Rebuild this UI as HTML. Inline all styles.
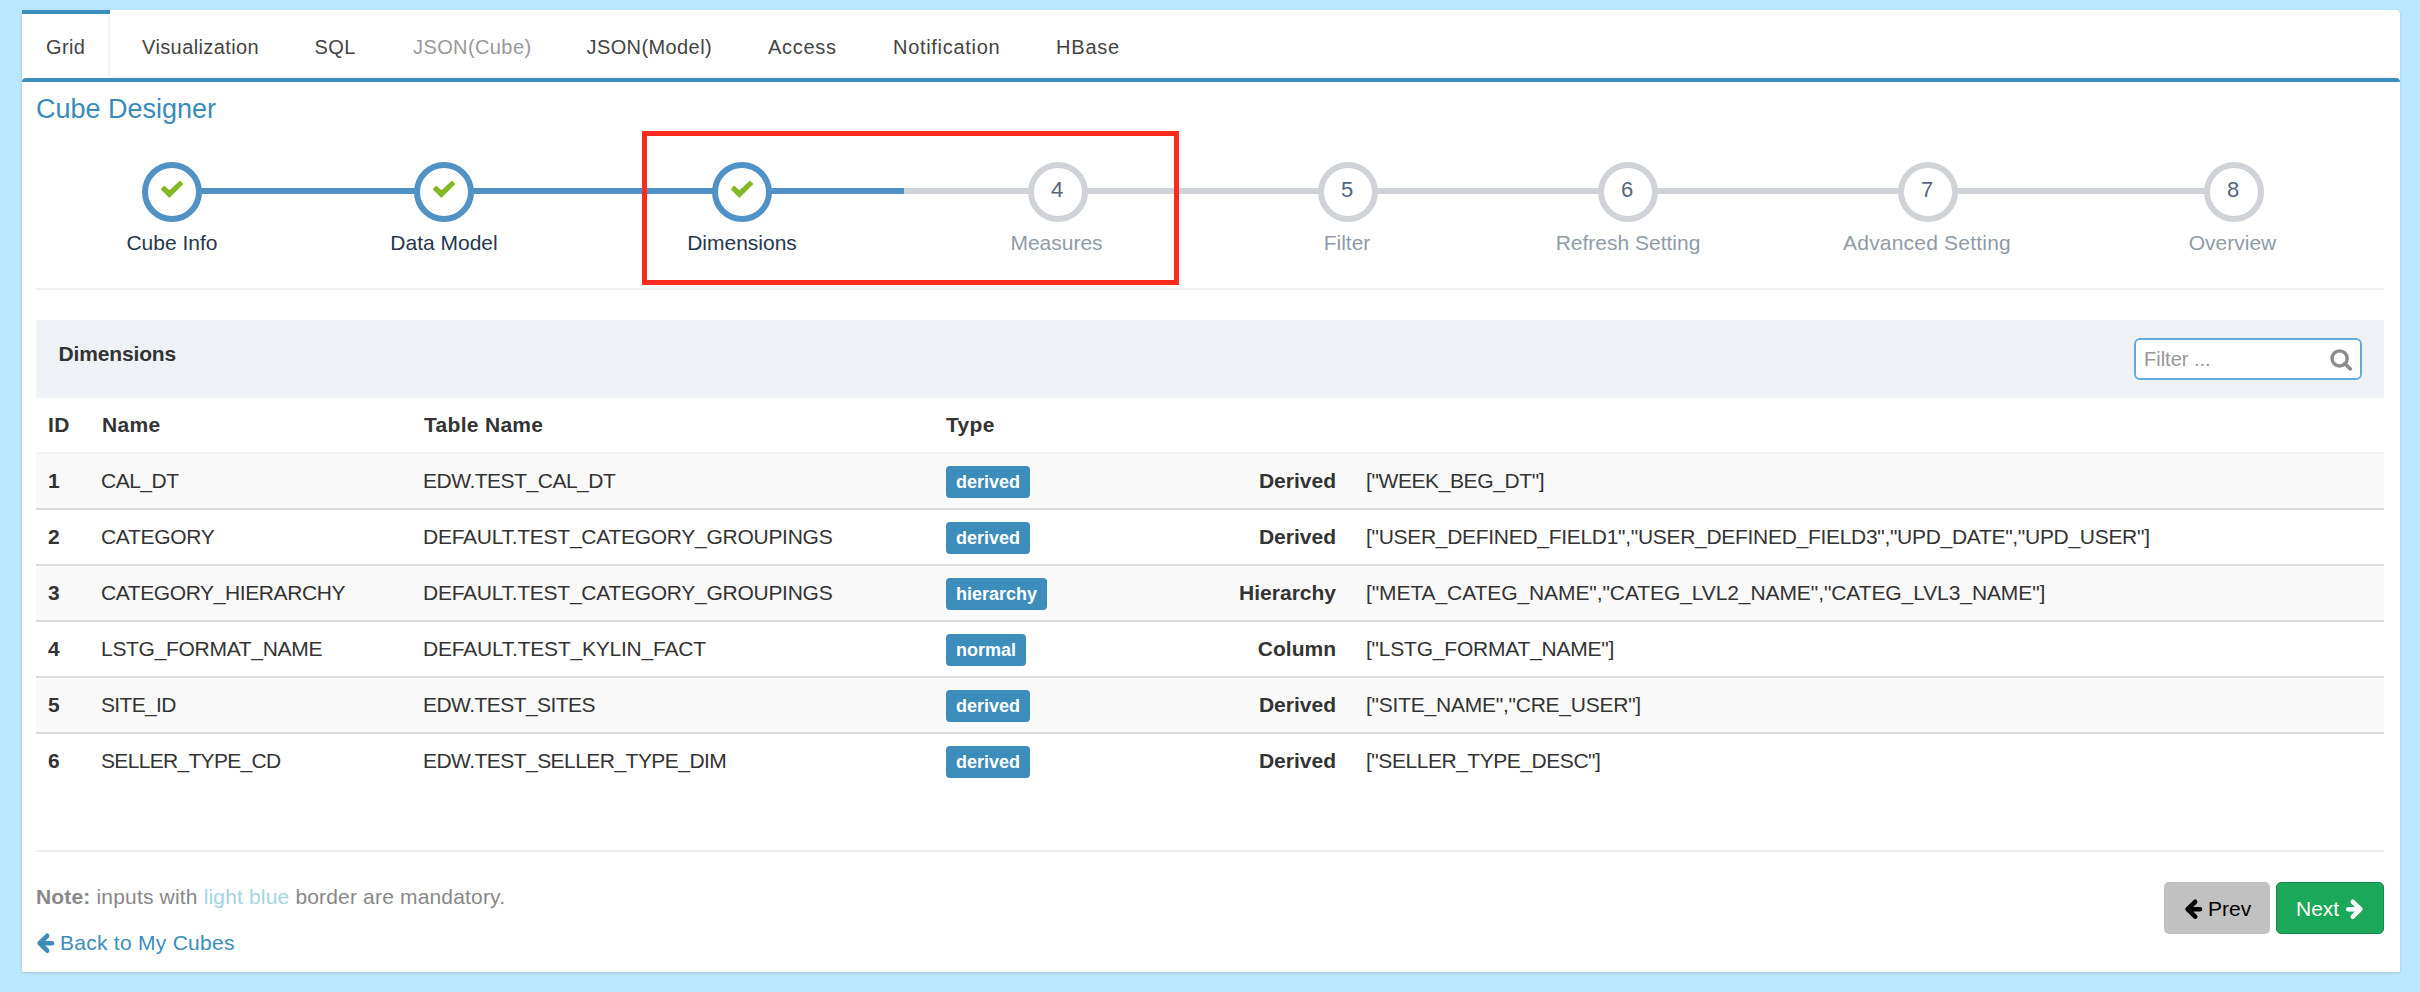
<!DOCTYPE html>
<html><head><meta charset="utf-8">
<style>
*{margin:0;padding:0;box-sizing:border-box}
html,body{width:2420px;height:992px;overflow:hidden;background:#bbe7fc;font-family:"Liberation Sans",sans-serif;color:#333}
.t{position:absolute;white-space:nowrap;line-height:1}
.circ{position:absolute;width:60px;height:60px;border-radius:50%;border:6px solid #5092c6;background:#fff}
.circ.todo{border-color:#cfd3d8}
</style></head><body>
<div style="position:absolute;left:22px;top:10px;width:2378px;height:962px;background:#fff;border-radius:0 4px 1px 1px;box-shadow:0 1px 3px rgba(0,0,0,0.16)"></div>
<div style="position:absolute;left:22px;top:10px;width:88px;height:4px;background:#3c8dbc"></div>
<div style="position:absolute;left:108px;top:14px;width:2px;height:62px;background:#f4f4f4"></div>
<div style="position:absolute;left:110px;top:76px;width:2290px;height:2px;background:#f4f4f4"></div>
<div style="position:absolute;left:22px;top:78px;width:2378px;height:4px;background:#3c8dbc;border-radius:4px 4px 0 0"></div>
<div class="t" style="left:46px;top:37.07px;font-size:20px;color:#444;font-weight:400;letter-spacing:0.4px">Grid</div>
<div class="t" style="left:142px;top:37.07px;font-size:20px;color:#444;font-weight:400;letter-spacing:0.4px">Visualization</div>
<div class="t" style="left:314.5px;top:37.07px;font-size:20px;color:#444;font-weight:400;letter-spacing:0.4px">SQL</div>
<div class="t" style="left:413px;top:37.07px;font-size:20px;color:#999;font-weight:400;letter-spacing:0.4px">JSON(Cube)</div>
<div class="t" style="left:586.5px;top:37.07px;font-size:20px;color:#444;font-weight:400;letter-spacing:0.4px">JSON(Model)</div>
<div class="t" style="left:768px;top:37.07px;font-size:20px;color:#444;font-weight:400;letter-spacing:0.7px">Access</div>
<div class="t" style="left:893px;top:37.07px;font-size:20px;color:#444;font-weight:400;letter-spacing:0.7px">Notification</div>
<div class="t" style="left:1056px;top:37.07px;font-size:20px;color:#444;font-weight:400;letter-spacing:0.8px">HBase</div>
<div class="t" style="left:36px;top:96.14px;font-size:27px;color:#3a8bbb;font-weight:400;">Cube Designer</div>
<div style="position:absolute;left:172px;top:188px;width:732px;height:6px;background:#5092c6"></div>
<div style="position:absolute;left:904px;top:188px;width:1330px;height:6px;background:#cfd3d8"></div>
<div class="circ" style="left:142px;top:162px"><svg width="60" height="60" viewBox="0 0 60 60" style="position:absolute;left:-6px;top:-6px"><path d="M19.7 27.2 L22.2 24.6 L27.5 29.3 L37.9 19.5 L40.4 22.1 L27.4 35.0 Z" fill="#84b823" stroke="#84b823" stroke-width="1.4" stroke-linejoin="round"/></svg></div>
<div class="t" style="left:-28px;top:232.22px;font-size:21px;color:#25374e;font-weight:400;width:400px;text-align:center">Cube Info</div>
<div class="circ" style="left:414px;top:162px"><svg width="60" height="60" viewBox="0 0 60 60" style="position:absolute;left:-6px;top:-6px"><path d="M19.7 27.2 L22.2 24.6 L27.5 29.3 L37.9 19.5 L40.4 22.1 L27.4 35.0 Z" fill="#84b823" stroke="#84b823" stroke-width="1.4" stroke-linejoin="round"/></svg></div>
<div class="t" style="left:244px;top:232.22px;font-size:21px;color:#25374e;font-weight:400;width:400px;text-align:center">Data Model</div>
<div class="circ" style="left:712px;top:162px"><svg width="60" height="60" viewBox="0 0 60 60" style="position:absolute;left:-6px;top:-6px"><path d="M19.7 27.2 L22.2 24.6 L27.5 29.3 L37.9 19.5 L40.4 22.1 L27.4 35.0 Z" fill="#84b823" stroke="#84b823" stroke-width="1.4" stroke-linejoin="round"/></svg></div>
<div class="t" style="left:542px;top:232.22px;font-size:21px;color:#25374e;font-weight:400;width:400px;text-align:center">Dimensions</div>
<div class="circ todo" style="left:1028px;top:162px"></div>
<div class="t" style="left:1027px;top:179.38px;font-size:22px;color:#566678;font-weight:400;width:60px;text-align:center">4</div>
<div class="t" style="left:856.5px;top:232.22px;font-size:21px;color:#8f9ba7;font-weight:400;width:400px;text-align:center">Measures</div>
<div class="circ todo" style="left:1318px;top:162px"></div>
<div class="t" style="left:1317px;top:179.38px;font-size:22px;color:#566678;font-weight:400;width:60px;text-align:center">5</div>
<div class="t" style="left:1147px;top:232.22px;font-size:21px;color:#8f9ba7;font-weight:400;width:400px;text-align:center">Filter</div>
<div class="circ todo" style="left:1598px;top:162px"></div>
<div class="t" style="left:1597px;top:179.38px;font-size:22px;color:#566678;font-weight:400;width:60px;text-align:center">6</div>
<div class="t" style="left:1428px;top:232.22px;font-size:21px;color:#8f9ba7;font-weight:400;width:400px;text-align:center">Refresh Setting</div>
<div class="circ todo" style="left:1898px;top:162px"></div>
<div class="t" style="left:1897px;top:179.38px;font-size:22px;color:#566678;font-weight:400;width:60px;text-align:center">7</div>
<div class="t" style="left:1727px;top:232.22px;font-size:21px;color:#8f9ba7;font-weight:400;letter-spacing:0.2px;width:400px;text-align:center">Advanced Setting</div>
<div class="circ todo" style="left:2204px;top:162px"></div>
<div class="t" style="left:2203px;top:179.38px;font-size:22px;color:#566678;font-weight:400;width:60px;text-align:center">8</div>
<div class="t" style="left:2032.5px;top:232.22px;font-size:21px;color:#8f9ba7;font-weight:400;width:400px;text-align:center">Overview</div>
<div style="position:absolute;left:36px;top:288px;width:2348px;height:2px;background:#eee"></div>
<div style="position:absolute;left:642px;top:131px;width:537px;height:154px;border:5px solid #fb2a1e"></div>
<div style="position:absolute;left:36px;top:320px;width:2348px;height:78px;background:#eef2f7"></div>
<div class="t" style="left:58.5px;top:342.52px;font-size:21px;color:#333;font-weight:700;letter-spacing:-0.15px">Dimensions</div>
<div style="position:absolute;left:2134px;top:338px;width:228px;height:42px;background:#fff;border:2px solid #62abde;border-radius:6px"></div>
<div class="t" style="left:2144px;top:349.07px;font-size:20px;color:#999;font-weight:400;">Filter ...</div>
<svg style="position:absolute;left:2325px;top:345px" width="30" height="30" viewBox="0 0 30 30"><circle cx="14.6" cy="13.4" r="7.55" fill="none" stroke="#8c8c8c" stroke-width="3.4"/><path d="M19.9 18.7 L25.3 23.9" stroke="#8c8c8c" stroke-width="3.6" stroke-linecap="round"/></svg>
<div class="t" style="left:48px;top:414.22px;font-size:21px;color:#333;font-weight:700;letter-spacing:0.3px">ID</div>
<div class="t" style="left:102px;top:414.22px;font-size:21px;color:#333;font-weight:700;letter-spacing:0.3px">Name</div>
<div class="t" style="left:424px;top:414.22px;font-size:21px;color:#333;font-weight:700;letter-spacing:0.3px">Table Name</div>
<div class="t" style="left:946px;top:414.22px;font-size:21px;color:#333;font-weight:700;letter-spacing:0.3px">Type</div>
<div style="position:absolute;left:36px;top:452px;width:2348px;height:56px;background:#f9f9f9"></div>
<div style="position:absolute;left:36px;top:564px;width:2348px;height:56px;background:#f9f9f9"></div>
<div style="position:absolute;left:36px;top:676px;width:2348px;height:56px;background:#f9f9f9"></div>
<div style="position:absolute;left:36px;top:452px;width:2348px;height:2px;background:#f3f3f3"></div>
<div style="position:absolute;left:36px;top:508px;width:2348px;height:2px;background:#dadada"></div>
<div style="position:absolute;left:36px;top:564px;width:2348px;height:2px;background:#dadada"></div>
<div style="position:absolute;left:36px;top:620px;width:2348px;height:2px;background:#dadada"></div>
<div style="position:absolute;left:36px;top:676px;width:2348px;height:2px;background:#dadada"></div>
<div style="position:absolute;left:36px;top:732px;width:2348px;height:2px;background:#dadada"></div>
<div class="t" style="left:48px;top:470.22px;font-size:21px;color:#333;font-weight:700;">1</div>
<div class="t" style="left:101px;top:470.22px;font-size:21px;color:#333;font-weight:400;letter-spacing:-0.5px">CAL_DT</div>
<div class="t" style="left:423px;top:470.22px;font-size:21px;color:#333;font-weight:400;letter-spacing:-0.48px">EDW.TEST_CAL_DT</div>
<div class="t" style="left:946px;top:465.5px;height:32px;padding:0 10px;background:#3c8dbc;border-radius:4px;color:#fff;font-weight:700;font-size:18px;line-height:32px">derived</div>
<div class="t" style="left:1136px;top:470.22px;font-size:21px;color:#333;font-weight:700;width:200px;text-align:right">Derived</div>
<div class="t" style="left:1366px;top:470.22px;font-size:21px;color:#333;font-weight:400;letter-spacing:-0.4px">[&quot;WEEK_BEG_DT&quot;]</div>
<div class="t" style="left:48px;top:526.22px;font-size:21px;color:#333;font-weight:700;">2</div>
<div class="t" style="left:101px;top:526.22px;font-size:21px;color:#333;font-weight:400;letter-spacing:-0.3px">CATEGORY</div>
<div class="t" style="left:423px;top:526.22px;font-size:21px;color:#333;font-weight:400;letter-spacing:-0.27px">DEFAULT.TEST_CATEGORY_GROUPINGS</div>
<div class="t" style="left:946px;top:521.5px;height:32px;padding:0 10px;background:#3c8dbc;border-radius:4px;color:#fff;font-weight:700;font-size:18px;line-height:32px">derived</div>
<div class="t" style="left:1136px;top:526.22px;font-size:21px;color:#333;font-weight:700;width:200px;text-align:right">Derived</div>
<div class="t" style="left:1366px;top:526.22px;font-size:21px;color:#333;font-weight:400;letter-spacing:-0.3px">[&quot;USER_DEFINED_FIELD1&quot;,&quot;USER_DEFINED_FIELD3&quot;,&quot;UPD_DATE&quot;,&quot;UPD_USER&quot;]</div>
<div class="t" style="left:48px;top:582.22px;font-size:21px;color:#333;font-weight:700;">3</div>
<div class="t" style="left:101px;top:582.22px;font-size:21px;color:#333;font-weight:400;letter-spacing:-0.4px">CATEGORY_HIERARCHY</div>
<div class="t" style="left:423px;top:582.22px;font-size:21px;color:#333;font-weight:400;letter-spacing:-0.27px">DEFAULT.TEST_CATEGORY_GROUPINGS</div>
<div class="t" style="left:946px;top:577.5px;height:32px;padding:0 10px;background:#3c8dbc;border-radius:4px;color:#fff;font-weight:700;font-size:18px;line-height:32px">hierarchy</div>
<div class="t" style="left:1136px;top:582.22px;font-size:21px;color:#333;font-weight:700;width:200px;text-align:right">Hierarchy</div>
<div class="t" style="left:1366px;top:582.22px;font-size:21px;color:#333;font-weight:400;letter-spacing:-0.09px">[&quot;META_CATEG_NAME&quot;,&quot;CATEG_LVL2_NAME&quot;,&quot;CATEG_LVL3_NAME&quot;]</div>
<div class="t" style="left:48px;top:638.22px;font-size:21px;color:#333;font-weight:700;">4</div>
<div class="t" style="left:101px;top:638.22px;font-size:21px;color:#333;font-weight:400;letter-spacing:-0.3px">LSTG_FORMAT_NAME</div>
<div class="t" style="left:423px;top:638.22px;font-size:21px;color:#333;font-weight:400;letter-spacing:-0.22px">DEFAULT.TEST_KYLIN_FACT</div>
<div class="t" style="left:946px;top:633.5px;height:32px;padding:0 10px;background:#3c8dbc;border-radius:4px;color:#fff;font-weight:700;font-size:18px;line-height:32px">normal</div>
<div class="t" style="left:1136px;top:638.22px;font-size:21px;color:#333;font-weight:700;width:200px;text-align:right">Column</div>
<div class="t" style="left:1366px;top:638.22px;font-size:21px;color:#333;font-weight:400;letter-spacing:-0.22px">[&quot;LSTG_FORMAT_NAME&quot;]</div>
<div class="t" style="left:48px;top:694.22px;font-size:21px;color:#333;font-weight:700;">5</div>
<div class="t" style="left:101px;top:694.22px;font-size:21px;color:#333;font-weight:400;letter-spacing:-0.65px">SITE_ID</div>
<div class="t" style="left:423px;top:694.22px;font-size:21px;color:#333;font-weight:400;letter-spacing:-0.55px">EDW.TEST_SITES</div>
<div class="t" style="left:946px;top:689.5px;height:32px;padding:0 10px;background:#3c8dbc;border-radius:4px;color:#fff;font-weight:700;font-size:18px;line-height:32px">derived</div>
<div class="t" style="left:1136px;top:694.22px;font-size:21px;color:#333;font-weight:700;width:200px;text-align:right">Derived</div>
<div class="t" style="left:1366px;top:694.22px;font-size:21px;color:#333;font-weight:400;letter-spacing:-0.24px">[&quot;SITE_NAME&quot;,&quot;CRE_USER&quot;]</div>
<div class="t" style="left:48px;top:750.22px;font-size:21px;color:#333;font-weight:700;">6</div>
<div class="t" style="left:101px;top:750.22px;font-size:21px;color:#333;font-weight:400;letter-spacing:-0.68px">SELLER_TYPE_CD</div>
<div class="t" style="left:423px;top:750.22px;font-size:21px;color:#333;font-weight:400;letter-spacing:-0.54px">EDW.TEST_SELLER_TYPE_DIM</div>
<div class="t" style="left:946px;top:745.5px;height:32px;padding:0 10px;background:#3c8dbc;border-radius:4px;color:#fff;font-weight:700;font-size:18px;line-height:32px">derived</div>
<div class="t" style="left:1136px;top:750.22px;font-size:21px;color:#333;font-weight:700;width:200px;text-align:right">Derived</div>
<div class="t" style="left:1366px;top:750.22px;font-size:21px;color:#333;font-weight:400;letter-spacing:-0.46px">[&quot;SELLER_TYPE_DESC&quot;]</div>
<div style="position:absolute;left:36px;top:850px;width:2348px;height:2px;background:#eee"></div>
<div class="t" style="left:36px;top:886.22px;font-size:21px;color:#888;font-weight:400;letter-spacing:0.17px"><b>Note:</b> inputs with <span style="color:#a5d4e4">light blue</span> border are mandatory.</div>
<svg style="position:absolute;left:31.9px;top:929.2px" width="26" height="28" viewBox="0 0 26 28"><path d="M15.2 6.8 L7.6 14.2 L15.2 21.6 M8 14.2 H20" fill="none" stroke="#3c8dbc" stroke-width="4.6" stroke-linecap="round" stroke-linejoin="round"/></svg>
<div class="t" style="left:60px;top:932.22px;font-size:21px;color:#3c8dbc;font-weight:400;letter-spacing:0.27px">Back to My Cubes</div>
<div style="position:absolute;left:2164px;top:882px;width:106px;height:52px;background:#c1c1c1;border-radius:5px"></div>
<svg style="position:absolute;left:2180px;top:895px" width="26" height="28" viewBox="0 0 26 28"><path d="M15.2 6.8 L7.6 14.2 L15.2 21.6 M8 14.2 H20" fill="none" stroke="#000" stroke-width="4.6" stroke-linecap="round" stroke-linejoin="round"/></svg>
<div class="t" style="left:2208px;top:898.22px;font-size:21px;color:#000;font-weight:400;">Prev</div>
<div style="position:absolute;left:2276px;top:882px;width:108px;height:52px;background:#1ba85a;border:1px solid #138a45;border-radius:5px"></div>
<div class="t" style="left:2296px;top:898.22px;font-size:21px;color:#fff;font-weight:400;">Next</div>
<svg style="position:absolute;left:2335px;top:895px" width="30" height="28" viewBox="0 0 30 28"><path d="M17.8 6.8 L25.4 14.2 L17.8 21.6 M25 14.2 H13.3" fill="none" stroke="#fff" stroke-width="4.6" stroke-linecap="round" stroke-linejoin="round"/></svg>
</body></html>
